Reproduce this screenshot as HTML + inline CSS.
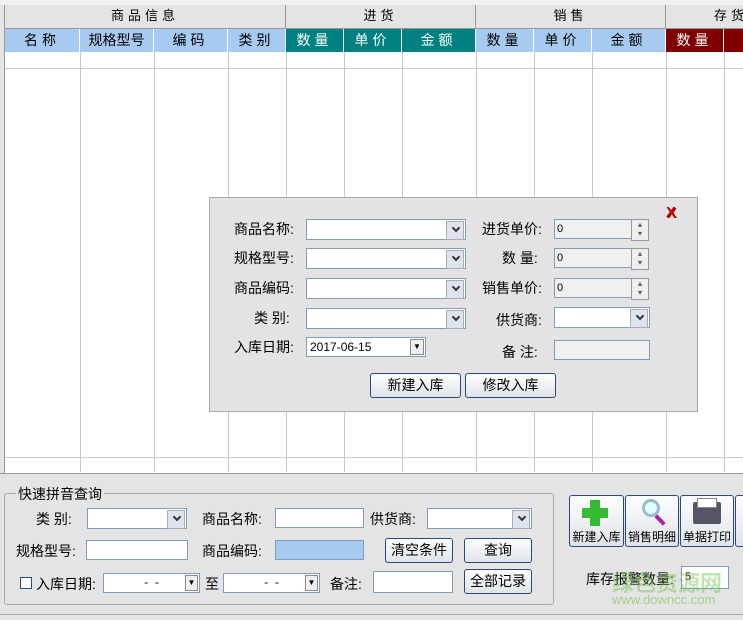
<!DOCTYPE html><html><head><meta charset="utf-8"><style>
*{box-sizing:border-box;margin:0;padding:0}
body{width:743px;height:620px;overflow:hidden;background:#fff;font-family:"Liberation Sans","Noto Sans CJK SC",sans-serif;font-size:13px;color:#000;position:relative}
.a{position:absolute}
.h1{background:#e4e4e4;border-right:1px solid #999;border-bottom:1px solid #999;text-align:center;line-height:22px;letter-spacing:4px}
.h2{border-right:1px solid #fff;text-align:center;line-height:22px;letter-spacing:4px;font-size:14px}
.b{background:#a6caf0}.t{background:#008080;color:#fff}.r{background:#800000;color:#fff}
.vl{position:absolute;top:52px;height:420px;width:1px;background:#c8c8c8}
.inp{position:absolute;background:#fff;border:1px solid #7f9db9;height:20px}
.cb{position:absolute;background:#fff;border:1px solid #7f9db9;height:21px}
.cb::after{content:"";position:absolute;right:1px;top:1px;width:16px;height:17px;background:#dde4ee;border:1px solid #aab}
.cb::before{content:"";position:absolute;right:6px;top:5px;width:4px;height:4px;border-right:2px solid #333;border-bottom:2px solid #333;transform:rotate(45deg);z-index:1}
.btn{position:absolute;border:1px solid #2c4a77;border-radius:3px;background:linear-gradient(#fdfdfd,#dfe3ea);text-align:center;line-height:22px;font-size:14px}
.lb{position:absolute;font-size:14px}
.sp{position:absolute;background:#f0f0f0;border:1px solid #7f9db9;height:20px;font-size:11px;padding-left:2px;line-height:18px}
.sp::after{content:"▴\A▾";white-space:pre;position:absolute;right:-18px;top:-1px;width:16px;height:20px;border:1px solid #999;background:#eee;font-size:8px;line-height:9px;text-align:center;color:#555}
</style></head><body>
<div class="a" style="left:0;top:0;width:743px;height:5px;background:#f0f0f0"></div>
<div class="a" style="left:0;top:5px;width:5px;height:470px;background:#e4e4e4;border-right:1px solid #999"></div>
<div class="a h1" style="left:5px;top:5px;width:281px;height:24px">商品信息</div>
<div class="a h1" style="left:286px;top:5px;width:190px;height:24px">进货</div>
<div class="a h1" style="left:476px;top:5px;width:190px;height:24px">销售</div>
<div class="a h1" style="left:666px;top:5px;width:90px;height:24px;text-align:left;padding-left:48px">存货</div>
<div class="a h2 b" style="left:5px;top:29px;width:75px;height:23px">名称</div>
<div class="a h2 b" style="left:80px;top:29px;width:74px;height:23px;letter-spacing:0">规格型号</div>
<div class="a h2 b" style="left:154px;top:29px;width:74px;height:23px">编码</div>
<div class="a h2 b" style="left:228px;top:29px;width:58px;height:23px">类别</div>
<div class="a h2 t" style="left:286px;top:29px;width:58px;height:23px">数量</div>
<div class="a h2 t" style="left:344px;top:29px;width:58px;height:23px">单价</div>
<div class="a h2 t" style="left:402px;top:29px;width:74px;height:23px">金额</div>
<div class="a h2 b" style="left:476px;top:29px;width:58px;height:23px">数量</div>
<div class="a h2 b" style="left:534px;top:29px;width:58px;height:23px">单价</div>
<div class="a h2 b" style="left:592px;top:29px;width:74px;height:23px">金额</div>
<div class="a h2 r" style="left:666px;top:29px;width:58px;height:23px">数量</div>
<div class="a h2 r" style="left:724px;top:29px;width:30px;height:23px"></div>
<div class="a" style="left:5px;top:68px;width:738px;height:1px;background:#c8c8c8"></div>
<div class="a" style="left:5px;top:457px;width:738px;height:1px;background:#c8c8c8"></div>
<div class="a" style="left:0;top:473px;width:743px;height:1px;background:#999"></div>
<div class="vl" style="left:80px"></div><div class="vl" style="left:154px"></div><div class="vl" style="left:228px"></div><div class="vl" style="left:286px"></div><div class="vl" style="left:344px"></div><div class="vl" style="left:402px"></div><div class="vl" style="left:476px"></div><div class="vl" style="left:534px"></div><div class="vl" style="left:592px"></div><div class="vl" style="left:666px"></div><div class="vl" style="left:724px"></div>

<div class="a" style="left:209px;top:197px;width:489px;height:215px;background:#e3e3e5;border:1px solid #aaa">
<div class="a" style="left:456px;top:8px;color:#c00;font-weight:bold;font-size:15px;line-height:14px;text-shadow:1px 1px 0 #800">X</div>
<div class="lb" style="left:24px;top:21px">商品名称:</div><div class="cb" style="left:96px;top:21px;width:160px"></div>
<div class="lb" style="left:24px;top:50px">规格型号:</div><div class="cb" style="left:96px;top:50px;width:160px"></div>
<div class="lb" style="left:24px;top:80px">商品编码:</div><div class="cb" style="left:96px;top:80px;width:160px"></div>
<div class="lb" style="left:44px;top:110px">类 别:</div><div class="cb" style="left:96px;top:110px;width:160px"></div>
<div class="lb" style="left:24px;top:139px">入库日期:</div>
<div class="inp" style="left:96px;top:139px;width:120px;font-size:12px;line-height:18px;padding-left:3px">2017-06-15<span style="position:absolute;right:1px;top:1px;width:14px;height:16px;border:1px solid #888;background:#eee;font-size:8px;text-align:center;line-height:14px">▼</span></div>
<div class="lb" style="left:272px;top:21px">进货单价:</div><div class="sp" style="left:344px;top:21px;width:78px">0</div>
<div class="lb" style="left:292px;top:50px">数 量:</div><div class="sp" style="left:344px;top:50px;width:78px">0</div>
<div class="lb" style="left:272px;top:80px">销售单价:</div><div class="sp" style="left:344px;top:80px;width:78px">0</div>
<div class="lb" style="left:286px;top:112px">供货商:</div><div class="cb" style="left:344px;top:109px;width:96px"></div>
<div class="lb" style="left:292px;top:144px">备 注:</div><div class="inp" style="left:344px;top:142px;width:96px;background:#f0f0f0"></div>
<div class="btn" style="left:160px;top:175px;width:91px;height:25px">新建入库</div>
<div class="btn" style="left:255px;top:175px;width:91px;height:25px">修改入库</div>
</div>

<div class="a" style="left:0;top:474px;width:743px;height:146px;background:#e4e4e4"></div>
<div class="a" style="left:0;top:614px;width:743px;height:6px;background:#e4e4e4;border-top:1px solid #aaa"></div>
<div class="a" style="left:4px;top:493px;width:550px;height:112px;border:1px solid #aaa;border-radius:3px"></div>
<div class="lb" style="left:16px;top:484px;background:#e4e4e4;padding:0 2px">快速拼音查询</div>
<div class="lb" style="left:36px;top:509px">类 别:</div><div class="cb" style="left:87px;top:508px;width:100px"></div>
<div class="lb" style="left:202px;top:509px">商品名称:</div><div class="inp" style="left:275px;top:508px;width:89px"></div>
<div class="lb" style="left:370px;top:509px">供货商:</div><div class="cb" style="left:427px;top:508px;width:105px"></div>
<div class="lb" style="left:16px;top:541px">规格型号:</div><div class="inp" style="left:86px;top:540px;width:102px"></div>
<div class="lb" style="left:202px;top:541px">商品编码:</div><div class="inp" style="left:275px;top:540px;width:89px;background:#a6caf0"></div>
<div class="btn" style="left:385px;top:538px;width:68px;height:25px">清空条件</div>
<div class="btn" style="left:464px;top:538px;width:68px;height:25px">查询</div>
<div class="a" style="left:20px;top:577px;width:12px;height:12px;border:1px solid #1c5180;background:#fff"></div>
<div class="lb" style="left:36px;top:574px">入库日期:</div>
<div class="inp" style="left:103px;top:573px;width:97px;text-align:center;font-size:12px;line-height:17px">- &nbsp;-<span style="position:absolute;right:1px;top:1px;width:13px;height:16px;border:1px solid #888;background:#eee;font-size:8px;line-height:14px">▼</span></div>
<div class="lb" style="left:205px;top:574px">至</div>
<div class="inp" style="left:223px;top:573px;width:97px;text-align:center;font-size:12px;line-height:17px">- &nbsp;-<span style="position:absolute;right:1px;top:1px;width:13px;height:16px;border:1px solid #888;background:#eee;font-size:8px;line-height:14px">▼</span></div>
<div class="lb" style="left:330px;top:574px">备注:</div><div class="inp" style="left:373px;top:571px;width:80px;height:22px"></div>
<div class="btn" style="left:464px;top:569px;width:68px;height:25px">全部记录</div>
<div class="btn" style="left:569px;top:495px;width:55px;height:52px;font-size:12px;line-height:14px;padding-top:34px">新建入库<div class="a" style="left:20px;top:4px;width:10px;height:26px;background:#3b3"></div><div class="a" style="left:12px;top:12px;width:26px;height:10px;background:#3b3"></div></div>
<div class="btn" style="left:625px;top:495px;width:54px;height:52px;font-size:12px;line-height:14px;padding-top:34px">销售明细<div class="a" style="left:16px;top:3px;width:18px;height:18px;border:3px solid #9bc;border-radius:50%;background:#dff"></div><div class="a" style="left:32px;top:18px;width:4px;height:12px;background:#a2a;transform:rotate(-45deg)"></div></div>
<div class="btn" style="left:680px;top:495px;width:54px;height:52px;font-size:12px;line-height:14px;padding-top:34px">单据打印<div class="a" style="left:12px;top:6px;width:28px;height:22px;background:#556;border-radius:2px"></div><div class="a" style="left:16px;top:2px;width:20px;height:10px;background:#fff;border:1px solid #888"></div></div>
<div class="btn" style="left:735px;top:495px;width:20px;height:52px"></div>
<div class="lb" style="left:586px;top:569px">库存报警数量:</div>
<div class="inp" style="left:681px;top:566px;width:48px;height:23px;font-size:11px;padding-left:3px;line-height:20px">5</div>
<div class="a" style="left:612px;top:566px;font-size:22px;color:rgba(120,190,80,.45);font-weight:bold">绿色资源网</div>
<div class="a" style="left:612px;top:592px;font-size:13px;color:rgba(120,190,80,.6)">www.downcc.com</div>
</body></html>
